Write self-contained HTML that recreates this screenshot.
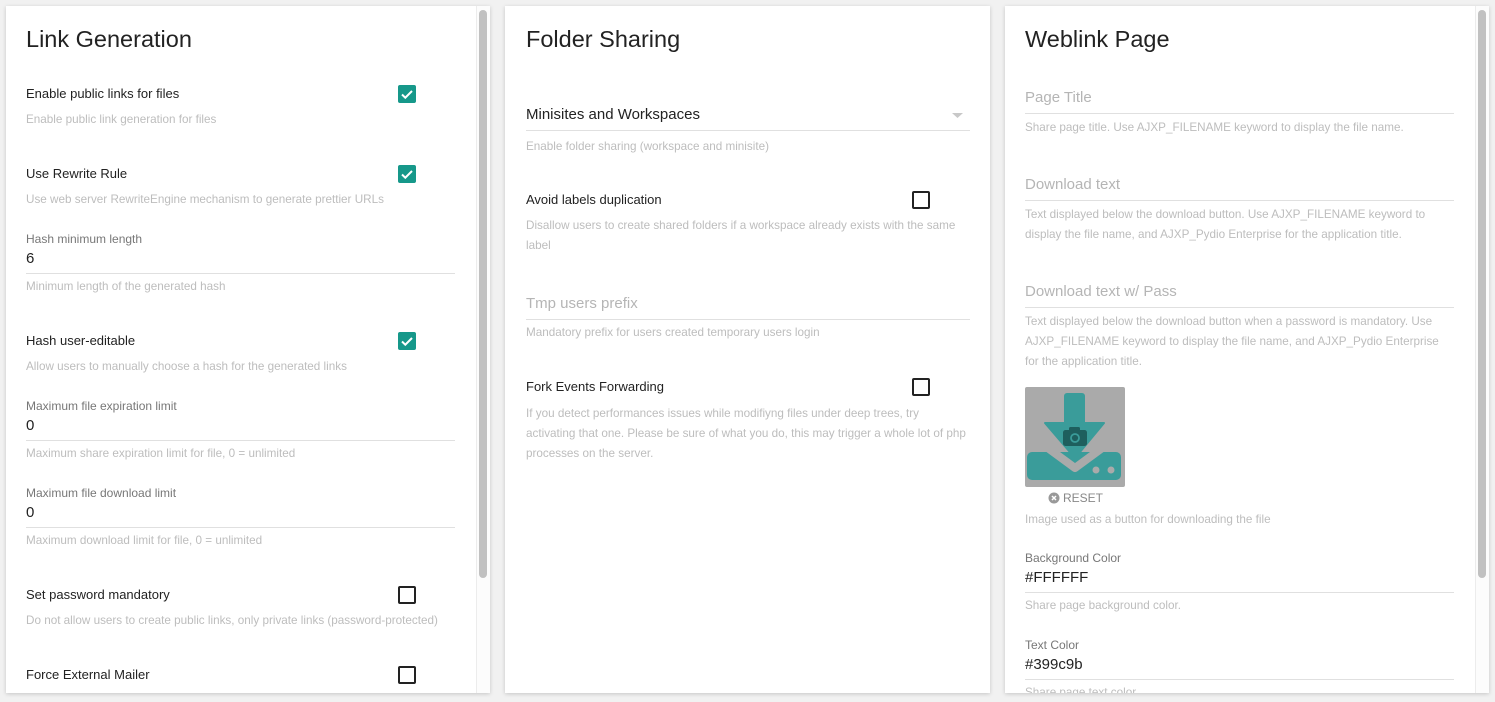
<!DOCTYPE html>
<html><head><meta charset="utf-8"><style>
*{margin:0;padding:0;box-sizing:border-box}
body{width:1495px;height:702px;background:#f1f1f1;font-family:"Liberation Sans",Roboto,sans-serif;position:relative;overflow:hidden}
.p{position:absolute;top:6px;height:687px;background:#fff;box-shadow:0 1px 4px rgba(0,0,0,.18);overflow:hidden}
.a{position:absolute;white-space:nowrap}
.h{font-size:23.5px;color:#222;line-height:30px}
.l{font-size:13px;color:#222;line-height:16px}
.d{font-size:11.7px;color:#bdbdbd;line-height:20px}
.f{font-size:12px;color:#777;line-height:16px}
.v{font-size:15px;color:#222;line-height:20px}
.ph{font-size:15px;color:#b5b5b5;line-height:20px}
.ln{position:absolute;height:1px;background:#e0e0e0}
.cb{position:absolute;width:18px;height:18px;border-radius:2px}
.on{background:#16988a}
.off{border:2px solid #222}
.sb{position:absolute;top:4px;width:8px;height:568px;background:#c1c1c1;border-radius:4px}
.tr{position:absolute;top:0;width:14px;height:687px;border-left:1px solid #ececec;background:#fcfcfc}
</style></head><body>
<div class="p" style="left:6px;width:484px">
<div class="tr" style="left:470px"></div><div class="sb" style="left:473px"></div>
</div>
<div class="p" style="left:505px;width:485px"></div>
<div class="p" style="left:1005px;width:484px">
<div class="tr" style="left:470px"></div><div class="sb" style="left:473px"></div>
</div>

<!-- panel 1 -->
<div class="a h" style="left:26px;top:24px">Link Generation</div>
<div class="a l" style="left:26px;top:86px">Enable public links for files</div>
<div class="a d" style="left:26px;top:110px">Enable public link generation for files</div>
<div class="a l" style="left:26px;top:166px">Use Rewrite Rule</div>
<div class="a d" style="left:26px;top:190px">Use web server RewriteEngine mechanism to generate prettier URLs</div>
<div class="a f" style="left:26px;top:231px">Hash minimum length</div>
<div class="a v" style="left:26px;top:249px">6</div>
<div class="ln" style="left:26px;width:429px;top:273px"></div>
<div class="a d" style="left:26px;top:277px">Minimum length of the generated hash</div>
<div class="a l" style="left:26px;top:333px">Hash user-editable</div>
<div class="a d" style="left:26px;top:357px">Allow users to manually choose a hash for the generated links</div>
<div class="a f" style="left:26px;top:398px">Maximum file expiration limit</div>
<div class="a v" style="left:26px;top:416px">0</div>
<div class="ln" style="left:26px;width:429px;top:440px"></div>
<div class="a d" style="left:26px;top:444px">Maximum share expiration limit for file, 0 = unlimited</div>
<div class="a f" style="left:26px;top:485px">Maximum file download limit</div>
<div class="a v" style="left:26px;top:503px">0</div>
<div class="ln" style="left:26px;width:429px;top:527px"></div>
<div class="a d" style="left:26px;top:531px">Maximum download limit for file, 0 = unlimited</div>
<div class="a l" style="left:26px;top:587px">Set password mandatory</div>
<div class="a d" style="left:26px;top:611px">Do not allow users to create public links, only private links (password-protected)</div>
<div class="a l" style="left:26px;top:667px">Force External Mailer</div>

<svg class="cb on" style="left:398px;top:85px" viewBox="0 0 18 18"><path d="M4 9.5l3.3 3.2L14 6" stroke="#fff" stroke-width="2" fill="none"/></svg>
<svg class="cb on" style="left:398px;top:165px" viewBox="0 0 18 18"><path d="M4 9.5l3.3 3.2L14 6" stroke="#fff" stroke-width="2" fill="none"/></svg>
<svg class="cb on" style="left:398px;top:332px" viewBox="0 0 18 18"><path d="M4 9.5l3.3 3.2L14 6" stroke="#fff" stroke-width="2" fill="none"/></svg>
<div class="cb off" style="left:398px;top:586px"></div>
<div class="cb off" style="left:398px;top:666px"></div>

<!-- panel 2 -->
<div class="a h" style="left:526px;top:24px">Folder Sharing</div>
<div class="a v" style="left:526px;top:105px">Minisites and Workspaces</div>
<svg class="a" style="left:952px;top:113px" width="12" height="6"><path d="M0 0h11L5.5 5z" fill="#c8c8c8"/></svg>
<div class="ln" style="left:526px;width:444px;top:130px"></div>
<div class="a d" style="left:526px;top:137px">Enable folder sharing (workspace and minisite)</div>
<div class="a l" style="left:526px;top:192px">Avoid labels duplication</div>
<div class="cb off" style="left:912px;top:191px"></div>
<div class="a d" style="left:526px;top:216px;white-space:normal;width:445px">Disallow users to create shared folders if a workspace already exists with the same label</div>
<div class="a ph" style="left:526px;top:294px">Tmp users prefix</div>
<div class="ln" style="left:526px;width:444px;top:319px"></div>
<div class="a d" style="left:526px;top:323px">Mandatory prefix for users created temporary users login</div>
<div class="a l" style="left:526px;top:379px">Fork Events Forwarding</div>
<div class="cb off" style="left:912px;top:378px"></div>
<div class="a d" style="left:526px;top:404px;white-space:normal;width:440px">If you detect performances issues while modifiyng files under deep trees, try activating that one. Please be sure of what you do, this may trigger a whole lot of php processes on the server.</div>

<!-- panel 3 -->
<div class="a h" style="left:1025px;top:24px">Weblink Page</div>
<div class="a ph" style="left:1025px;top:88px">Page Title</div>
<div class="ln" style="left:1025px;width:429px;top:113px"></div>
<div class="a d" style="left:1025px;top:118px">Share page title. Use AJXP_FILENAME keyword to display the file name.</div>
<div class="a ph" style="left:1025px;top:175px">Download text</div>
<div class="ln" style="left:1025px;width:429px;top:200px"></div>
<div class="a d" style="left:1025px;top:205px;white-space:normal;width:425px">Text displayed below the download button. Use AJXP_FILENAME keyword to display the file name, and AJXP_Pydio Enterprise for the application title.</div>
<div class="a ph" style="left:1025px;top:282px">Download text w/ Pass</div>
<div class="ln" style="left:1025px;width:429px;top:307px"></div>
<div class="a d" style="left:1025px;top:312px;white-space:normal;width:425px">Text displayed below the download button when a password is mandatory. Use AJXP_FILENAME keyword to display the file name, and AJXP_Pydio Enterprise for the application title.</div>
<svg class="a" style="left:1025px;top:387px" width="100" height="100" viewBox="0 0 100 100">
<rect width="100" height="100" rx="2" fill="#aaa"/>
<rect x="2" y="65" width="94" height="28" rx="5" fill="#3a9c9a"/>
<path d="M16 56L50 81L84 56" stroke="#aaa" stroke-width="8" fill="none" stroke-linejoin="round"/>
<rect x="39" y="6" width="21" height="34" rx="3" fill="#3a9c9a"/>
<path d="M20 36H79L50 71Z" fill="#3a9c9a" stroke="#3a9c9a" stroke-width="2" stroke-linejoin="round"/>
<circle cx="71" cy="83" r="3.5" fill="#aaa"/><circle cx="86" cy="83" r="3.5" fill="#aaa"/>
<rect x="38" y="43" width="24" height="16" rx="2.5" fill="#1e5f5e"/><rect x="44" y="40" width="11" height="5" rx="1.5" fill="#1e5f5e"/>
<circle cx="50" cy="51" r="4" fill="none" stroke="#3a9c9a" stroke-width="1.8"/>
</svg>
<svg class="a" style="left:1048px;top:492px" width="12" height="12"><circle cx="6" cy="6" r="5.5" fill="#999"/><path d="M4 4l4 4M8 4l-4 4" stroke="#fff" stroke-width="1.5"/></svg>
<div class="a" style="left:1063px;top:490px;font-size:12px;color:#888;line-height:16px">RESET</div>
<div class="a d" style="left:1025px;top:510px">Image used as a button for downloading the file</div>
<div class="a f" style="left:1025px;top:550px">Background Color</div>
<div class="a v" style="left:1025px;top:568px">#FFFFFF</div>
<div class="ln" style="left:1025px;width:429px;top:592px"></div>
<div class="a d" style="left:1025px;top:596px">Share page background color.</div>
<div class="a f" style="left:1025px;top:637px">Text Color</div>
<div class="a v" style="left:1025px;top:655px">#399c9b</div>
<div class="ln" style="left:1025px;width:429px;top:679px"></div>
<div style="position:absolute;left:1005px;top:682px;width:470px;height:11px;overflow:hidden"><div class="a d" style="left:20px;top:1px">Share page text color.</div></div>
</body></html>
